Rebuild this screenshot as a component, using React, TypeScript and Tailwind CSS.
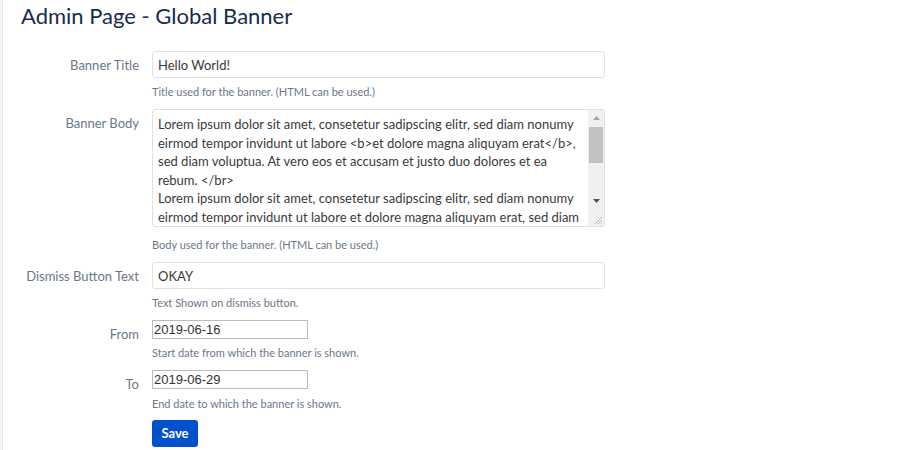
import React, { useState } from 'react';

const BODY =
  'Lorem ipsum dolor sit amet, consetetur sadipscing elitr, sed diam nonumy eirmod tempor invidunt ut labore <b>et dolore magna aliquyam erat</b>, sed diam voluptua. At vero eos et accusam et justo duo dolores et ea rebum. </br>\n' +
  'Lorem ipsum dolor sit amet, consetetur sadipscing elitr, sed diam nonumy eirmod tempor invidunt ut labore et dolore magna aliquyam erat, sed diam voluptua. At vero eos et accusam et justo duo dolores et ea rebum. Stet clita kasd gubergren, no sea takimata sanctus est Lorem ipsum dolor sit amet.';

const font = { fontFamily: 'Lato, "Liberation Sans", sans-serif' };
const dateFont = { fontFamily: '"Liberation Sans", Arial, sans-serif' };

function Label({ children }: { children: React.ReactNode }) {
  return (
    <label className="w-[136px] shrink-0 text-right text-[13px] leading-[18px] pt-[5px] text-[#6b778c]">
      {children}
    </label>
  );
}

function Help({ children, top = 'mt-[6px]' }: { children: React.ReactNode; top?: string }) {
  return <div className={`text-[11px] leading-[16px] text-[#6b778c] ${top}`}>{children}</div>;
}

// fake classic scrollbar drawn over the textarea's right edge
function ScrollBar() {
  return (
    <div className="absolute right-[1px] top-[1px] bottom-[1px] w-[16px] flex flex-col bg-[#f0f0f0]">
      <div className="h-[16px] flex items-center justify-center">
        <svg width="7" height="4" viewBox="0 0 7 4">
          <path d="M0 4 L3.5 0 L7 4 Z" fill="#a3a3a3" />
        </svg>
      </div>
      <div className="flex-1">
        <div className="mx-[1px] mt-[1px] h-[36px] bg-[#c1c1c1]" />
      </div>
      <div className="h-[16px] flex items-center justify-center">
        <svg width="7" height="4" viewBox="0 0 7 4">
          <path d="M0 0 L7 0 L3.5 4 Z" fill="#505050" />
        </svg>
      </div>
      <div className="h-[17px] bg-[#f0f0f0] flex items-end justify-end pr-[1px] pb-[1px]">
        <svg width="10" height="10" viewBox="0 0 10 10">
          <path d="M9 2 L2 9 M9 5 L5 9 M9 8 L8 9" stroke="#b5b5b5" strokeWidth="1" />
        </svg>
      </div>
    </div>
  );
}

export default function App() {
  const [title, setTitle] = useState('Hello World!');
  const [body, setBody] = useState(BODY);
  const [dismiss, setDismiss] = useState('OKAY');
  const [from, setFrom] = useState('2019-06-16');
  const [to, setTo] = useState('2019-06-29');

  return (
    <div className="flex min-h-[450px] bg-white" style={font}>
      <div className="w-[3px] bg-[#f4f5f7] border-r border-[#e4e6ea]" />
      <div className="flex-1 pt-[3px]">
        <h2 className="ml-[18px] text-[22px] leading-[26px] text-[#172b4d]">Admin Page - Global Banner</h2>

        <form className="mt-[22px]" onSubmit={(e) => e.preventDefault()}>
          <div className="flex gap-[13px]">
            <Label>Banner Title</Label>
            <div>
              <input
                value={title}
                onChange={(e) => setTitle(e.target.value)}
                className="block w-[453px] h-[27px] rounded-[3px] border border-[#dfe1e6] px-[5px] text-[13px] text-[#3a3a3a] outline-none"
              />
              <Help>Title used for the banner. (HTML can be used.)</Help>
            </div>
          </div>

          <div className="flex gap-[13px] mt-[9px]">
            <Label>Banner Body</Label>
            <div>
              <div className="relative w-[453px] h-[118px]">
                <textarea
                  value={body}
                  onChange={(e) => setBody(e.target.value)}
                  className="block w-full h-full resize-none overflow-hidden rounded-[3px] border border-[#dfe1e6] pl-[5px] pr-[20px] py-[5px] text-[13px] leading-[18.6px] text-[#3a3a3a] outline-none"
                />
                <ScrollBar />
              </div>
              <Help top="mt-[10px]">Body used for the banner. (HTML can be used.)</Help>
            </div>
          </div>

          <div className="flex gap-[13px] mt-[9px]">
            <Label>Dismiss Button Text</Label>
            <div>
              <input
                value={dismiss}
                onChange={(e) => setDismiss(e.target.value)}
                className="block w-[453px] h-[27px] rounded-[3px] border border-[#dfe1e6] px-[5px] text-[13px] text-[#3a3a3a] outline-none"
              />
              <Help>Text Shown on dismiss button.</Help>
            </div>
          </div>

          <div className="flex gap-[13px] mt-[9px]">
            <Label>From</Label>
            <div>
              <input
                value={from}
                onChange={(e) => setFrom(e.target.value)}
                className="block w-[156px] h-[19px] border border-[#b8bcc4] px-[1px] text-[13px] text-[#333333] outline-none"
                style={dateFont}
              />
              <Help>Start date from which the banner is shown.</Help>
            </div>
          </div>

          <div className="flex gap-[13px] mt-[9px]">
            <Label>To</Label>
            <div>
              <input
                value={to}
                onChange={(e) => setTo(e.target.value)}
                className="block w-[156px] h-[19px] border border-[#b8bcc4] px-[1px] text-[13px] text-[#333333] outline-none"
                style={dateFont}
              />
              <Help top="mt-[7px]">End date to which the banner is shown.</Help>
            </div>
          </div>

          <div className="flex gap-[13px] mt-[8px]">
            <div className="w-[136px] shrink-0" />
            <button
              type="submit"
              className="block h-[27px] w-[46px] rounded-[3px] bg-[#0052cc] text-white text-[13px] font-bold"
            >
              Save
            </button>
          </div>
        </form>
      </div>
    </div>
  );
}
